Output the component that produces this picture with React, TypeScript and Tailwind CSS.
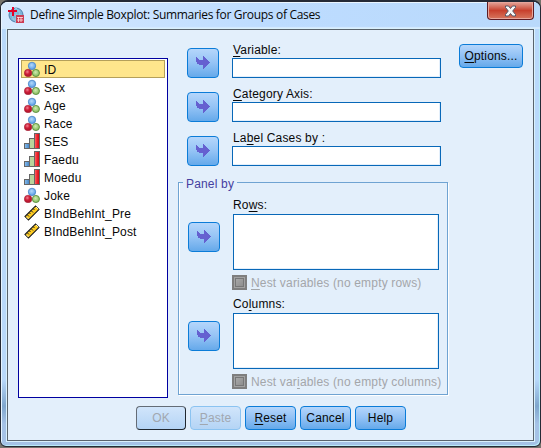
import type { ReactNode } from "react";

type Kind = "nominal" | "ordinal" | "scale";

const variables: { name: string; kind: Kind }[] = [
  { name: "ID", kind: "nominal" },
  { name: "Sex", kind: "nominal" },
  { name: "Age", kind: "nominal" },
  { name: "Race", kind: "nominal" },
  { name: "SES", kind: "ordinal" },
  { name: "Faedu", kind: "ordinal" },
  { name: "Moedu", kind: "ordinal" },
  { name: "Joke", kind: "nominal" },
  { name: "BIndBehInt_Pre", kind: "scale" },
  { name: "BIndBehInt_Post", kind: "scale" },
];

function KindIcon({ kind }: { kind: Kind }) {
  if (kind === "nominal") {
    return (
      <svg width="16" height="16" viewBox="0 0 16 16" className="shrink-0">
        <defs>
          <radialGradient id="nb" cx=".45" cy=".4"><stop offset="0" stopColor="#b4d8fa" /><stop offset="1" stopColor="#65a6e8" /></radialGradient>
          <radialGradient id="nr" cx=".4" cy=".35"><stop offset="0" stopColor="#f08090" /><stop offset=".6" stopColor="#ce1e38" /><stop offset="1" stopColor="#b81830" /></radialGradient>
          <radialGradient id="ng" cx=".45" cy=".4"><stop offset="0" stopColor="#d0eab0" /><stop offset="1" stopColor="#8cc064" /></radialGradient>
        </defs>
        <circle cx="8" cy="4.9" r="3.7" fill="url(#nb)" stroke="#4884c8" strokeWidth=".8" />
        <circle cx="4.1" cy="12" r="3.8" fill="url(#nr)" stroke="#981c30" strokeWidth=".5" />
        <circle cx="11.9" cy="12" r="3.6" fill="url(#ng)" stroke="#508434" strokeWidth=".8" />
      </svg>
    );
  }
  if (kind === "ordinal") {
    return (
      <svg width="16" height="16" viewBox="0 0 16 16" className="shrink-0">
        <defs>
          <linearGradient id="ob"><stop offset="0" stopColor="#8cc0f0" /><stop offset="1" stopColor="#4080c0" /></linearGradient>
          <linearGradient id="or"><stop offset="0" stopColor="#ff7070" /><stop offset=".5" stopColor="#f02830" /><stop offset="1" stopColor="#c80c14" /></linearGradient>
        </defs>
        <rect x=".5" y="10.5" width="5" height="5" fill="url(#ob)" stroke="#666" />
        <rect x="5.5" y="5.5" width="5" height="10" fill="#b8d49c" stroke="#666" />
        <rect x="10.5" y=".5" width="5" height="15" fill="url(#or)" stroke="#666" />
      </svg>
    );
  }
  return (
    <svg width="16" height="16" viewBox="0 0 16 16" className="shrink-0">
      <path d="M1 11.5 11.5 1 15 4.5 4.5 15Z" fill="#ffcc20" stroke="#222" strokeWidth="1.1" />
      <path d="M3 9.5 5 11.5M5 7.5 6.5 9M7 5.5 9 7.5M9 3.5 10.5 5" stroke="#222" strokeWidth="1" />
      <path d="m2.5 12 2 2M12 2l2.2 2.2" stroke="#fff0a0" strokeWidth="1" />
    </svg>
  );
}

function ArrowButton({ className }: { className: string }) {
  return (
    <button className={`flex h-[30px] w-8 shrink-0 items-center justify-center rounded-[4px] border border-[#0b7cd8] bg-linear-to-b from-[#b5d6fb] via-[#94c3f5] to-[#65a9ea] ${className}`}>
      <svg width="14" height="14" viewBox="0 0 14 14" shapeRendering="crispEdges">
        <path d="M0 1h1v1h1v1h1v1h4V0h1v1h1v1h1v1h1v1h1v1h1v1h1v1h-1v1h-1v1h-1v1h-1v1h-1v1h-1v1h-1v1H7V9H3V8H1V6H0Z" fill="#6560d0" />
      </svg>
    </button>
  );
}

function Field({ children, className }: { children: ReactNode; className: string }) {
  return (
    <div className={`flex h-[44px] ${className}`}>
      <ArrowButton className="mt-[5px]" />
      <div className="ml-[13px]">
        <div className="h-[15px] whitespace-nowrap pl-px leading-[14px]">{children}</div>
        <div className="h-5 w-[209px] border border-[#0868b8] bg-white shadow-[inset_-1px_-1px_#e3effb]" />
      </div>
    </div>
  );
}

function PanelGroup({ label, note }: { label: ReactNode; note: ReactNode }) {
  return (
    <div className="flex h-[99px]">
      <ArrowButton className="mt-[24px]" />
      <div className="ml-3">
        <div className="ml-px h-4 leading-[14px]">{label}</div>
        <div className="ml-px h-[56px] w-[206px] border border-[#0868b8] bg-white shadow-[inset_-1px_-1px_#e3effb]" />
        <div className="mt-[5px] flex h-[15px] items-start whitespace-nowrap text-[#a3a6aa]">
          <span className="flex size-[15px] shrink-0 items-center justify-center border-2 border-[#7e7e7e] bg-[#a2a2a2]">
            <span className="size-[9px] border border-[#777] bg-linear-to-br from-[#a8a8a8] to-[#8e8e8e]" />
          </span>
          <span className="ml-[4px] leading-[17px]">{note}</span>
        </div>
      </div>
    </div>
  );
}

function U({ children }: { children: ReactNode }) {
  return <span className="underline decoration-1 underline-offset-[2px] [text-decoration-skip-ink:none]">{children}</span>;
}

const buttonBase = "flex h-6 shrink-0 items-center justify-center whitespace-nowrap rounded-[4px] border";
const activeButton = "border-[#0b7cd8] bg-linear-to-b from-[#b5d6fb] via-[#91c1f5] to-[#65a9ea]";

export default function App() {
  return (
    <div className="h-[448px] w-[541px] bg-[#77736c]">
      <div className="flex h-[447px] w-[541px] flex-col overflow-hidden rounded-[8px] rounded-b-[6px] border border-t-2 border-[#252a36] bg-linear-to-b from-[#b9d9fb] from-85% via-[#7fa6cd] via-91% to-[#a5c2e6] to-95% font-['Liberation_Sans',Arial,sans-serif] text-[12px] tracking-[0.17px] text-[#080808] shadow-[inset_1px_1px_#e6f4ff,inset_-1px_-1px_#b9ecf8]">
        <header className="flex h-[27px] shrink-0 bg-linear-to-r from-[#d8eaff] via-[#bddcff] to-[#b9d9fb] pl-[7px] shadow-[inset_1px_1px_#eaf5ff,inset_0_-2px_1px_#d5eaff]">
          <svg width="16" height="17" viewBox="0 0 16 17" className="mt-[5px] shrink-0">
            <circle cx="8" cy="8" r="7" fill="#79b1d6" stroke="#527fac" />
            <path d="M2 8h12M8 1v14M3.5 4h9M3.5 12h9" stroke="#a5d2ea" strokeWidth=".7" />
            <path d="M8 1C3 5 3 11 8 15M8 1c5 4 5 10 0 14" fill="none" stroke="#a5d2ea" strokeWidth=".7" />
            <path d="M4 0h2v3h3v2H6v4H4V5H0V3h4Z" fill="#e40028" />
            <path d="M8 8h8v8H8Z" fill="#cb3c54" />
            <path d="M9 10.500h6M9 13h6M10.500 10v5M13 10v5" stroke="#ffe2e2" strokeWidth=".8" />
          </svg>
          <span className="ml-[6px] mt-[5px] whitespace-nowrap font-['Open_Sans','Noto_Sans',sans-serif] text-[12px] leading-[16px] tracking-[-0.32px]">Define Simple Boxplot: Summaries for Groups of Cases</span>
          <button className="ml-auto mr-[6px] flex h-[18px] w-[47px] shrink-0 items-center justify-center rounded-b-[4px] border border-t-0 border-[#5c1c24] bg-linear-to-b from-[#e4a59b] via-[#c8402d] via-50% to-[#d6755d] shadow-[inset_0_0_0_1px_#e7a69c]">
            <svg width="13" height="12" viewBox="0 0 13 12">
              <path d="M1.500 1h3l2 2.500 2-2.500h3v1.500L8.700 6l2.800 3.500V11h-3l-2-2.500-2 2.500h-3V9.500L4.300 6 1.500 2.500Z" fill="#f7f7f7" stroke="#535668" />
            </svg>
          </button>
        </header>
        <main className="ml-[6px] flex h-[412px] w-[527px] shrink-0 flex-col border border-[#59636c] bg-[#e3effb] shadow-[0_0_0_1px_#d9f0fc]">
          <div className="flex h-[376px] shrink-0">
            <ul className="ml-[10px] mt-[28px] h-[340px] w-[150px] shrink-0 border border-[#0000a0] bg-white px-[2px] pt-px">
              {variables.map((item, index) => (
                <li key={item.name} className={`flex h-[18px] items-center border pl-[2px] ${index === 0 ? "border-[#b5a05a] bg-[#ffe68c]" : "border-transparent"}`}>
                  <KindIcon kind={item.kind} />
                  <span className="ml-[4px] pt-[2px] leading-4">{item.name}</span>
                </li>
              ))}
            </ul>
            <div className="ml-[10px] w-[272px] shrink-0 pt-[13px]">
              <Field className="ml-[9px]"><U>V</U>ariable:</Field>
              <Field className="ml-[9px]"><U>C</U>ategory Axis:</Field>
              <Field className="ml-[9px]">La<U>b</U>el Cases by :</Field>
              <fieldset className="mt-px h-[219px] w-[270px] border border-[#6fa3d2] pl-[9px] shadow-[1px_1px_white,inset_1px_0_white]">
                <legend className="-ml-[5px] h-[13px] px-[3px] leading-[16px] text-[#4540a0]">Panel by</legend>
                <div className="mt-[9px]">
                  <PanelGroup label={<>Ro<U>w</U>s:</>} note={<><U>N</U>est variables (no empty rows)</>} />
                  <PanelGroup label={<>Co<U>l</U>umns:</>} note={<>Nest var<U>i</U>ables (no empty columns)</>} />
                </div>
              </fieldset>
            </div>
            <button className={`${buttonBase} ${activeButton} ml-[9px] mt-[14px] w-16`}><span><U>O</U>ptions...</span></button>
          </div>
          <footer className="ml-[128px] flex gap-1">
            <button className={`${buttonBase} w-[50px] border-[#202830] border-l-[#646c76] border-t-[#646c76] bg-linear-to-b from-[#d1e5fb] to-[#b4d4f5] text-[#a1a7b0]`}>OK</button>
            <button className={`${buttonBase} w-[51px] border-[#8bc3f1] bg-linear-to-b from-[#d1e5fb] to-[#b4d4f5] text-[#a1a7b0]`}><span><U>P</U>aste</span></button>
            <button className={`${buttonBase} ${activeButton} w-[51px]`}><span><U>R</U>eset</span></button>
            <button className={`${buttonBase} ${activeButton} w-[51px]`}>Cancel</button>
            <button className={`${buttonBase} ${activeButton} w-[51px]`}>Help</button>
          </footer>
        </main>
      </div>
    </div>
  );
}
